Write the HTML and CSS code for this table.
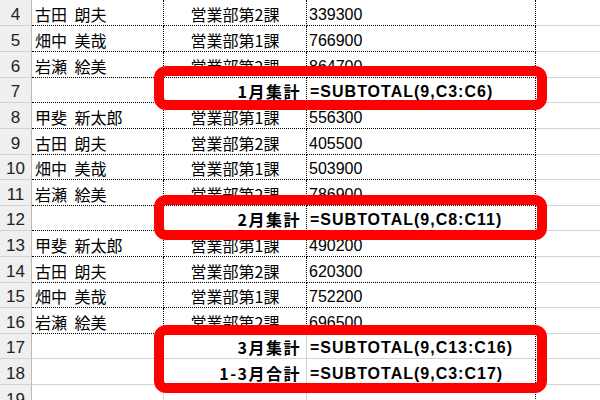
FILE: index.html
```html
<!DOCTYPE html>
<html lang="ja">
<head>
<meta charset="utf-8">
<title>SUBTOTAL</title>
<link rel="stylesheet" href="styles.css">
</head>
<body>
<div class="sheet">
  <div class="grid">
    <div class="rh">4</div><div class="c a">古田 朗夫</div><div class="c b">営業部第2課</div><div class="c n">339300</div><div class="d"></div>
    <div class="rh">5</div><div class="c a">畑中 美哉</div><div class="c b">営業部第1課</div><div class="c n">766900</div><div class="d"></div>
    <div class="rh">6</div><div class="c a">岩瀬 絵美</div><div class="c b">営業部第2課</div><div class="c n">864700</div><div class="d"></div>
    <div class="rh">7</div><div class="c a"></div><div class="c b lbl">1月集計</div><div class="c f">=SUBTOTAL(9,C3:C6)</div><div class="d"></div>
    <div class="rh">8</div><div class="c a">甲斐 新太郎</div><div class="c b">営業部第1課</div><div class="c n">556300</div><div class="d"></div>
    <div class="rh">9</div><div class="c a">古田 朗夫</div><div class="c b">営業部第2課</div><div class="c n">405500</div><div class="d"></div>
    <div class="rh">10</div><div class="c a">畑中 美哉</div><div class="c b">営業部第1課</div><div class="c n">503900</div><div class="d"></div>
    <div class="rh">11</div><div class="c a">岩瀬 絵美</div><div class="c b">営業部第2課</div><div class="c n">786900</div><div class="d"></div>
    <div class="rh">12</div><div class="c a"></div><div class="c b lbl">2月集計</div><div class="c f">=SUBTOTAL(9,C8:C11)</div><div class="d"></div>
    <div class="rh">13</div><div class="c a">甲斐 新太郎</div><div class="c b">営業部第1課</div><div class="c n">490200</div><div class="d"></div>
    <div class="rh">14</div><div class="c a">古田 朗夫</div><div class="c b">営業部第2課</div><div class="c n">620300</div><div class="d"></div>
    <div class="rh">15</div><div class="c a">畑中 美哉</div><div class="c b">営業部第1課</div><div class="c n">752200</div><div class="d"></div>
    <div class="rh">16</div><div class="c a">岩瀬 絵美</div><div class="c b">営業部第2課</div><div class="c n">696500</div><div class="d"></div>
    <div class="rh">17</div><div class="g a"></div><div class="g b lbl">3月集計</div><div class="g cr f">=SUBTOTAL(9,C13:C16)</div><div class="d"></div>
    <div class="rh">18</div><div class="g a"></div><div class="g b lbl">1-3月合計</div><div class="g cr f">=SUBTOTAL(9,C3:C17)</div><div class="d"></div>
    <div class="rh">19</div><div class="g a"></div><div class="g b"></div><div class="g cr"></div><div class="d"></div>
  </div>
  <div class="mark m1"></div>
  <div class="mark m2"></div>
  <div class="mark m3"></div>
</div>
</body>
</html>
```
FILE: styles.css
```css
* { box-sizing: border-box; }
html, body { margin: 0; padding: 0; background: #fff; }
body { width: 600px; height: 400px; overflow: hidden; }

.sheet { position: relative; width: 600px; height: 400px; overflow: hidden; }

.grid {
  display: grid;
  grid-template-columns: 32px 132px 143px 229px 1fr;
  grid-template-rows: 26px 26px 26px 25px 26px 26px 25px 26px 25px 26px 26px 25px 26px 25px 26px 26px;
  font-family: "Noto Sans CJK JP", "Liberation Sans", sans-serif;
  font-size: 16px;
  color: #000;
}

.grid > div {
  display: flex;
  align-items: flex-end;
  line-height: 16px;
  padding-bottom: 3px;
  white-space: nowrap;
  overflow: hidden;
}

.rh {
  background: #efefef;
  border-right: 1px solid #b9b9b9;
  border-bottom: 1px solid #d2d2d2;
  justify-content: center;
  font-family: "Liberation Sans", sans-serif;
  font-size: 17px;
  color: #222;
  padding-bottom: 2px !important;
}

.c { border-right: 1px dotted #000; border-bottom: 1px dotted #000; }
.g { border-right: 1px solid #d4d4d4; border-bottom: 1px solid #d4d4d4; }
.g.cr { border-right: 1px dotted #000; }
.d { border-bottom: 1px solid #d4d4d4; }

.a { padding-left: 3px; word-spacing: 4px; }
.b { justify-content: center; }
.n {
  padding-left: 2px;
  font-family: "Liberation Sans", sans-serif;
  font-size: 16px;
  padding-bottom: 2px !important;
}
.lbl {
  justify-content: flex-end;
  padding-right: 5px;
  font-weight: bold;
  letter-spacing: 1.5px;
}
.f {
  padding-left: 3px;
  font-family: "Liberation Sans", sans-serif;
  font-weight: bold;
  font-size: 16px;
  letter-spacing: 1px;
  padding-bottom: 2px !important;
}

.mark {
  position: absolute;
  left: 154px;
  width: 393px;
  border: 10px solid #ff0000;
  border-radius: 12px;
}
.m1 { top: 66px; height: 44px; }
.m2 { top: 195px; height: 45px; }
.m3 { top: 325px; height: 68px; }
```
